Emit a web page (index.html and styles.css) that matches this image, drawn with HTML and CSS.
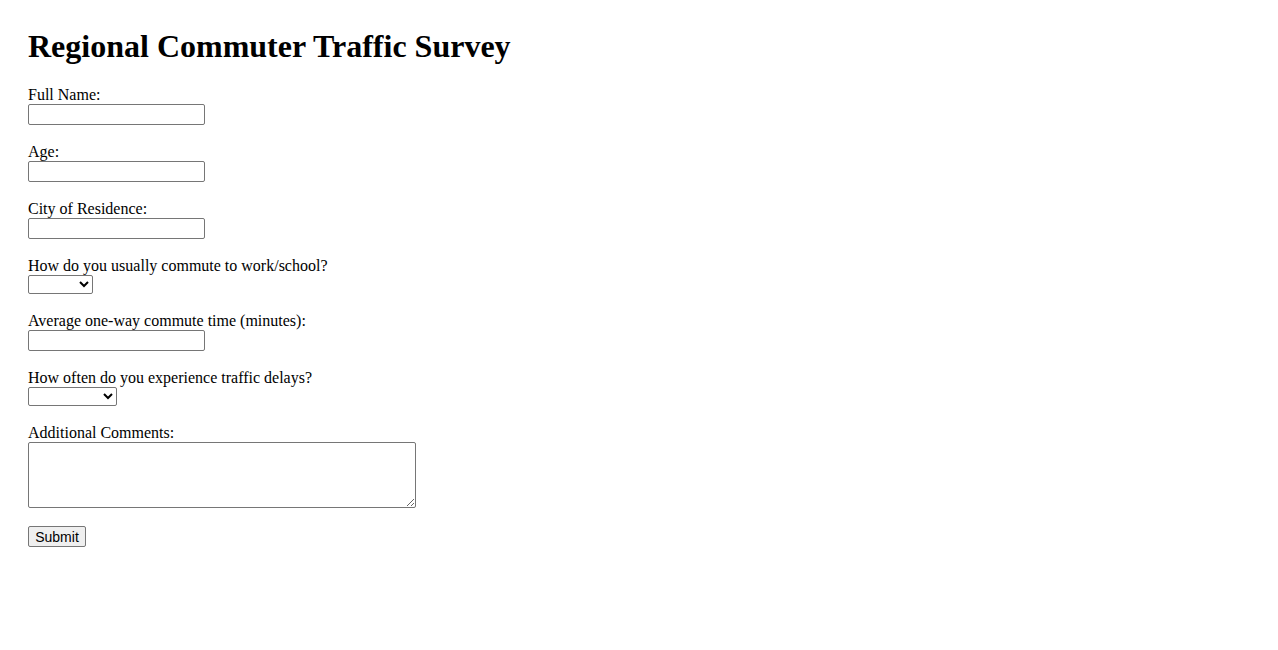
FILE: index.html
```html
<!DOCTYPE html>
<html lang="en">
<head>
    <meta charset="UTF-8">
    <meta name="viewport" content="width=device-width, initial-scale=1.0">
    <title>Regional Commuter Traffic Survey</title>
    <link rel="stylesheet" href="styles.css">
</head>
<body>

    <h1>Regional Commuter Traffic Survey</h1>

    <!-- Survey Form -->
    <form id="surveyForm">
        <label for="fullName">Full Name:</label><br>
        <input type="text" id="fullName" name="fullName" class="text-field"><br><br>

        <label for="age">Age:</label><br>
        <input type="text" id="age" name="age" class="text-field"><br><br>

        <label for="city">City of Residence:</label><br>
        <input type="text" id="city" name="city" class="text-field"><br><br>

        <label for="commuteMode">How do you usually commute to work/school?</label><br>
        <select id="commuteMode" name="commuteMode" class="select-mode">
            <option value=""></option>
            <option value="car">Car</option>
            <option value="bus">Bus</option>
            <option value="train">Train</option>
            <option value="bike">Bike</option>
            <option value="walk">Walk</option>
        </select><br><br>

        <label for="commuteTime">Average one-way commute time (minutes):</label><br>
        <input type="text" id="commuteTime" name="commuteTime" class="text-field"><br><br>

        <label for="delays">How often do you experience traffic delays?</label><br>
        <select id="delays" name="delays" class="select-delays">
            <option value=""></option>
            <option value="never">Never</option>
            <option value="rarely">Rarely</option>
            <option value="sometimes">Sometimes</option>
            <option value="often">Often</option>
            <option value="always">Always</option>
        </select><br><br>

        <label for="comments">Additional Comments:</label><br>
        <textarea id="comments" name="comments" rows="4" cols="50" class="comments"></textarea><br><br>

        <button type="submit" class="submit-btn">Submit</button>
    </form>

</body>
</html>
```

FILE: styles.css
```css
/* General Styling */
body {
    font-family: "Liberation Serif", "Times New Roman", serif;
    font-size: 16px;
    margin: 8px;
    padding: 20px;
    background: #fff;
    color: #000;
}

h1 {
    font-size: 32px;
    font-weight: bold;
    margin: 0 0 21.44px;
}

/* Form Fields */
.text-field {
    box-sizing: border-box;
    width: 177px;
    height: 21px;
    margin: 0;
    padding: 1px 2px;
    border: 1px solid #767676;
    border-radius: 2px;
    font-family: "Liberation Sans", Arial, sans-serif;
    font-size: 13.33px;
}

.select-mode,
.select-delays {
    box-sizing: border-box;
    height: 19px;
    margin: 0;
    border: 1px solid #767676;
    border-radius: 2px;
    background: #fff;
    font-family: "Liberation Sans", Arial, sans-serif;
    font-size: 13.33px;
}

.select-mode {
    width: 65px;
}

.select-delays {
    width: 89px;
}

.comments {
    box-sizing: border-box;
    width: 388px;
    height: 66px;
    margin: 0;
    padding: 2px;
    border: 1px solid #767676;
    border-radius: 2px;
    font-family: "Liberation Mono", monospace;
    font-size: 13.33px;
    vertical-align: bottom;
}

/* Submit Button */
.submit-btn {
    box-sizing: border-box;
    width: 58px;
    height: 21px;
    margin: 0;
    padding: 1px 6px;
    border: 1px solid #767676;
    border-radius: 2px;
    background-color: #efefef;
    color: #000;
    font-family: "Liberation Sans", Arial, sans-serif;
    font-size: 14px;
}
```
